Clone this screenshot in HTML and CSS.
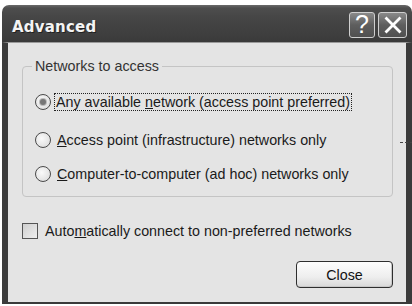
FILE: index.html
```html
<!DOCTYPE html>
<html>
<head>
<meta charset="utf-8">
<link rel="stylesheet" href="styles.css">
</head>
<body>
<div class="window">
  <div class="titlebar">
    <span class="title">Advanced</span>
    <div class="caption-buttons">
      <span class="cap-btn help">?</span>
      <span class="cap-btn close">
        <svg width="20" height="20" viewBox="0 0 20 20"><path d="M3.5 3.5 L16.5 16.5 M16.5 3.5 L3.5 16.5" stroke="#fff" stroke-width="2.8" stroke-linecap="square" fill="none"/></svg>
      </span>
    </div>
  </div>
  <div class="client">
    <fieldset class="group">
      <legend>Networks to access</legend>
      <div class="opt first">
        <span class="radio checked"></span>
        <span class="label focus">Any available <u>n</u>etwork (access point preferred)</span>
      </div>
      <div class="opt second">
        <span class="radio"></span>
        <span class="label"><u>A</u>ccess point (infrastructure) networks only</span>
      </div>
      <div class="opt third">
        <span class="radio"></span>
        <span class="label"><u>C</u>omputer-to-computer (ad hoc) networks only</span>
      </div>
    </fieldset>
    <div class="check-row">
      <span class="checkbox"></span>
      <span class="label">Auto<u>m</u>atically connect to non-preferred networks</span>
    </div>
    <div class="footer">
      <button class="btn">Close</button>
    </div>
    <span class="stray"></span>
  </div>
</div>
</body>
</html>
```
FILE: styles.css
```css
* { box-sizing: border-box; }
html, body { margin: 0; padding: 0; background: #fff; }
body { width: 412px; height: 306px; overflow: hidden; font-family: "Liberation Sans", Arial, sans-serif; color: #1a1a1a; }

.window {
  margin: 5px 0 0 2px;
  width: 410px;
  height: 299px;
  display: flex;
  flex-direction: column;
}

.titlebar {
  height: 37px;
  border-radius: 7px 7px 0 0;
  background: linear-gradient(#6a6a6a 0px, #4e4e4e 3px, #464646 12px, #3e3e3e 30px, #3a3a3a 37px);
  display: flex;
  align-items: center;
  justify-content: space-between;
  padding: 0 5px 0 10px;
}
.title {
  color: #f4f4f4;
  font-family: "DejaVu Sans", sans-serif;
  font-weight: bold;
  font-size: 15px;
  letter-spacing: 0.2px;
  margin-top: 6px;
  text-shadow: 1px 1px 0 #222;
}
.caption-buttons { display: flex; gap: 3px; margin-top: 2px; }
.cap-btn {
  width: 26px;
  height: 26px;
  border: 1px solid #cfcfcf;
  border-radius: 3px;
  background: linear-gradient(#8a8a8a, #5e5e5e 50%, #505050);
  display: flex;
  align-items: center;
  justify-content: center;
  color: #fff;
}
.cap-btn.help { font-family: "Liberation Sans", sans-serif; font-size: 25px; line-height: 1; }
.cap-btn.close { width: 29px; }

.client {
  position: relative;
  flex: 1;
  background: #e4e4e4;
  border-left: 6px solid #3c3c3c;
  border-right: 6px solid #3a3a3a;
  border-bottom: 2px solid #3a3a3a;
  border-top: 1px solid #9a9a9a;
  padding: 15px 13px 0 14px;
  display: flex;
  flex-direction: column;
}

.group {
  margin: 0;
  border: 1px solid #c4c4c4;
  border-radius: 4px;
  padding: 18px 0 5px 12px;
  height: 139px;
}
.group legend {
  font-size: 14.3px;
  color: #333;
  padding: 0 3px;
  margin-left: -3px;
}
.opt {
  display: flex;
  align-items: center;
  gap: 6px;
  font-size: 14.3px;
  height: 20px;
}
.opt.second { margin-top: 18px; }
.opt.third { margin-top: 14px; }

.radio {
  width: 16px;
  height: 16px;
  border-radius: 50%;
  border: 1.5px solid #4a4a4a;
  background: radial-gradient(circle at 40% 40%, #fafafa, #d8d8d8);
  flex: none;
  position: relative;
}
.radio.checked::after {
  content: "";
  position: absolute;
  left: 3.5px; top: 3.5px;
  width: 6px; height: 6px;
  border-radius: 50%;
  background: #777;
  box-shadow: 0 0 0 1px #bbb;
}
.label.focus { outline: 1px dotted #222; outline-offset: 0; margin-left: -2px; padding: 0 1px; }
u { text-underline-offset: 1px; }

.check-row {
  display: flex;
  align-items: center;
  gap: 7px;
  font-size: 14.3px;
  margin-top: 25px;
  height: 18px;
}
.checkbox {
  width: 16px;
  height: 16px;
  border: 1px solid #555;
  background: linear-gradient(135deg, #cfcfcf, #efefef);
  flex: none;
}

.footer {
  display: flex;
  justify-content: flex-end;
  margin-top: 21px;
}
.btn {
  width: 97px;
  height: 27px;
  border: 1px solid #2e2e2e;
  border-radius: 4px;
  background: linear-gradient(#fdfdfd, #eeeeee 60%, #d8d8d8);
  box-shadow: inset -1px -1px 0 #c8c8c8;
  font-family: "Liberation Sans", Arial, sans-serif;
  font-size: 14.3px;
  color: #111;
  padding: 0;
}

.stray {
  position: absolute;
  right: -6px;
  top: 99px;
  width: 12px;
  height: 1px;
  background: repeating-linear-gradient(90deg, #444 0 3px, transparent 3px 5px);
}
```
